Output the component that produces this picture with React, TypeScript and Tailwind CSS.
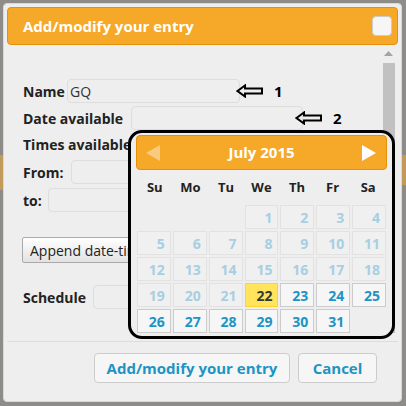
import React from 'react';

const font = { fontFamily: '"Open Sans", "Liberation Sans", sans-serif' };

const LeftArrow = () => (
  <svg width="28" height="14" viewBox="0 0 28 14" className="shrink-0">
    <path d="M1.5 7 L9 1.5 L9 4.5 L26 4.5 L26 9.5 L9 9.5 L9 12.5 Z" fill="none" stroke="#000" strokeWidth="2" strokeLinejoin="miter" />
  </svg>
);

type Cell = { day: number | null; past?: boolean; today?: boolean };

const weeks: Cell[][] = (() => {
  const cells: Cell[] = [];
  for (let i = 0; i < 3; i++) cells.push({ day: null });
  for (let d = 1; d <= 31; d++) cells.push({ day: d, past: d < 22, today: d === 22 });
  while (cells.length % 7) cells.push({ day: null });
  const rows: Cell[][] = [];
  for (let i = 0; i < cells.length; i += 7) rows.push(cells.slice(i, i + 7));
  return rows;
})();

const DayCell = ({ cell }: { cell: Cell }) => {
  if (cell.day === null) return <div className="h-[24px]" />;
  if (cell.today)
    return (
      <div className="flex h-[24px] items-center justify-end border border-[#fed22f] bg-[#ffe45c] pr-[5px] text-[14px] font-bold text-[#363636]">
        {cell.day}
      </div>
    );
  if (cell.past)
    return (
      <div className="flex h-[24px] items-center justify-end border border-[#e2e2e2] bg-[#f0f0f0] pr-[5px] text-[14px] font-bold text-[#a7cfe1]">
        {cell.day}
      </div>
    );
  return (
    <div className="flex h-[24px] items-center justify-end border border-[#cccccc] bg-[#f6f6f6] pr-[5px] text-[14px] font-bold text-[#1c94c4]">
      {cell.day}
    </div>
  );
};

const DatePicker = () => (
  <div className="absolute left-[128px] top-[130px] h-[209px] w-[267px] rounded-[14px] border-[3px] border-black bg-[#eeeeee] px-[5px] pt-[2px]">
    <div className="relative flex h-[35px] items-center justify-center rounded-[4px] border border-[#e78f08] bg-[#f6a828] text-[15px] font-bold text-white">
      <svg width="16" height="16" viewBox="0 0 16 16" className="absolute left-[8px] top-[9px] opacity-40">
        <polygon points="15,0 15,16 1,8" fill="#fff" />
      </svg>
      July 2015
      <svg width="16" height="16" viewBox="0 0 16 16" className="absolute right-[9px] top-[9px]">
        <polygon points="1,0 1,16 15,8" fill="#fff" />
      </svg>
    </div>
    <div className="grid h-[35px] grid-cols-7 items-center px-[1px] text-[13px] font-bold text-[#222222]">
      {['Su', 'Mo', 'Tu', 'We', 'Th', 'Fr', 'Sa'].map((d) => (
        <div key={d} className="text-center">
          {d}
        </div>
      ))}
    </div>
    <div className="grid grid-cols-7 gap-x-[2px] gap-y-[2px] px-[1px]">
      {weeks.flat().map((c, i) => (
        <DayCell key={i} cell={c} />
      ))}
    </div>
  </div>
);

const Input = ({ w, value }: { w: string; value?: string }) => (
  <div className={`${w} flex h-[24px] items-center rounded-[4px] border border-[#dddddd] bg-[#eeeeee] px-[2px] text-[14px] text-[#333]`}>
    {value}
  </div>
);

export default function App() {
  return (
    <div className="relative h-[406px] w-[406px] overflow-hidden bg-[#8e8c88] pt-[3px] pl-[3px]" style={font}>
      {/* bits of the page behind the overlay */}
      <div className="absolute left-0 top-[155px] h-[35px] w-[3px] bg-[#c29a5c]" />
      <div className="absolute right-0 top-[155px] h-[30px] w-[4px] bg-[#c29a5c]" />

      <div className="relative flex h-[399px] w-[399px] flex-col rounded-[4px] border border-[#d8d8d8] bg-[#eeeeee] p-[3px]">
        <div className="flex h-[38px] shrink-0 items-center justify-between rounded-[4px] border border-[#e78f08] bg-[#f6a828] pl-[15px] pr-[5px]">
          <span className="text-[15px] font-bold text-white">Add/modify your entry</span>
          <div className="h-[20px] w-[20px] rounded-[4px] border border-[#cccccc] bg-[#f6f6f6]" />
        </div>

        <div className="flex h-[296px] shrink-0">
          <div className="flex-1 pl-[16px] pt-[34px] text-[14px] text-[#222222]">
            <div className="flex h-[24px] items-center">
              <span className="w-[44px] font-bold">Name</span>
              <Input w="w-[173px]" value="GQ" />
              <span className="-ml-[4px]">
                <LeftArrow />
              </span>
              <span className="ml-[10px] text-[15px] font-bold text-black">1</span>
            </div>
            <div className="mt-[3px] flex h-[24px] items-center">
              <span className="w-[108px] font-bold">Date available</span>
              <Input w="w-[172px]" />
              <span className="-ml-[8px]">
                <LeftArrow />
              </span>
              <span className="ml-[10px] text-[15px] font-bold text-black">2</span>
            </div>
            <div className="mt-[2px] flex h-[24px] items-center font-bold">Times available</div>
            <div className="mt-[4px] flex h-[24px] items-center">
              <span className="w-[48px] font-bold">From:</span>
              <Input w="w-[172px]" />
            </div>
            <div className="mt-[4px] flex h-[24px] items-center">
              <span className="w-[25px] font-bold">to:</span>
              <Input w="w-[172px]" />
            </div>
            <button className="mt-[25px] ml-[-1px] h-[26px] rounded-[2px] border border-[#aaaaaa] bg-gradient-to-b from-[#ffffff] to-[#e2e2e2] px-[7px] text-[14px] text-[#222222]">
              Append date-time to schedule
            </button>
            <div className="mt-[22px] flex h-[24px] items-center">
              <span className="w-[70px] font-bold">Schedule</span>
              <Input w="w-[172px]" />
            </div>
          </div>
          <div className="flex w-[13px] flex-col items-center pt-[6px]">
            <svg width="9" height="5" viewBox="0 0 9 5">
              <polygon points="0,5 9,5 4.5,0" fill="#a3a3a3" />
            </svg>
            <div className="mt-[7px] h-[270px] w-[12px] bg-[#c1c1c1]" />
          </div>
          <div className="w-[3px]" />
        </div>

        <div className="flex flex-1 items-start justify-end gap-[8px] border-t border-[#dddddd] pr-[21px] pt-[11px]">
          <button className="h-[30px] w-[196px] rounded-[4px] border border-[#cccccc] bg-[#f6f6f6] text-[15px] font-bold text-[#1c94c4]">
            Add/modify your entry
          </button>
          <button className="h-[30px] w-[79px] rounded-[4px] border border-[#cccccc] bg-[#f6f6f6] text-[15px] font-bold text-[#1c94c4]">
            Cancel
          </button>
        </div>
      </div>
      <DatePicker />
    </div>
  );
}
